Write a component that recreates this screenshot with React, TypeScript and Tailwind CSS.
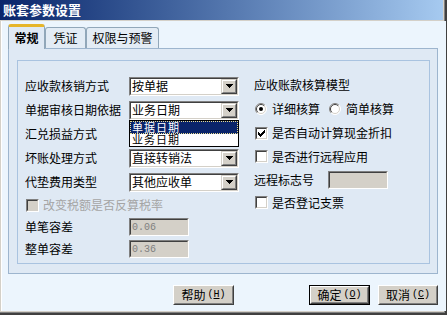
import React from "react";

const outerSunken =
  "border border-t-[#808080] border-l-[#808080] border-r-white border-b-white";
const innerSunken =
  "border border-t-[#404040] border-l-[#404040] border-r-[#d4d0c8] border-b-[#d4d0c8]";

const Arrow = () => (
  <div className="w-[16px] h-full border border-t-[#d4d0c8] border-l-[#d4d0c8] border-r-[#404040] border-b-[#404040]">
    <div className="w-full h-full bg-[#d4d0c8] border border-t-white border-l-white border-r-[#808080] border-b-[#808080] flex items-center justify-center">
      <svg width="7" height="4" viewBox="0 0 7 4" shapeRendering="crispEdges">
        <path d="M0 0h7v1h-1v1h-1v1h-1v1h-1v-1h-1v-1h-1v-1h-1z" fill="#000" />
      </svg>
    </div>
  </div>
);

const Select = ({ value, open }: { value: string; open?: boolean }) => (
  <div className={`relative w-[110px] h-[19px] ${outerSunken}`}>
    <div className={`h-full flex bg-white ${innerSunken}`}>
      <div className="flex-1 flex items-center pl-[1px] leading-none">{value}</div>
      <Arrow />
    </div>
    {open && (
      <div className="absolute z-10 left-[-1px] top-[18px] w-[110px] border border-black bg-white flex flex-col text-[11px]">
        <div className="h-[13px] bg-[#0a246a] text-white outline outline-1 outline-dotted outline-[#e8dc90] -outline-offset-1 flex items-center pl-[2px] leading-[11px] tracking-[1px]">
          单据日期
        </div>
        <div className="h-[12px] flex items-center pl-[2px] leading-[11px] tracking-[1px]">业务日期</div>
      </div>
    )}
  </div>
);

const Check = ({ checked, disabled }: { checked?: boolean; disabled?: boolean }) => (
  <div className={`w-[13px] h-[13px] shrink-0 ${outerSunken}`}>
    <div
      className={`w-full h-full flex items-center justify-center ${innerSunken} ${
        disabled ? "bg-[#d4d0c8]" : "bg-white"
      }`}
    >
      {checked && (
        <svg width="7" height="7" viewBox="0 0 7 7" shapeRendering="crispEdges">
          <path d="M6 0h1v3h-1v1h-1v1h-1v1h-1v1h-1v-1h-1v-1h-1v-3h1v1h1v1h1v-1h1v-1h1z" fill="#000" />
        </svg>
      )}
    </div>
  </div>
);

const Radio = ({ checked }: { checked?: boolean }) => (
  <svg width="12" height="12" viewBox="0 0 12 12" className="shrink-0">
    <circle cx="6" cy="6" r="5.5" fill="#fff" stroke="#ffffff" />
    <path d="M2.1 9.9A5.5 5.5 0 0 1 9.9 2.1" fill="none" stroke="#808080" />
    <path d="M2.8 9.2A4.5 4.5 0 0 1 9.2 2.8" fill="none" stroke="#404040" />
    <path d="M9.2 2.8A4.5 4.5 0 0 1 2.8 9.2" fill="none" stroke="#d4d0c8" />
    {checked && <circle cx="6" cy="6" r="2" fill="#000" />}
  </svg>
);

const Field = ({ value }: { value?: string }) => (
  <div className={`w-[60px] h-[18px] ${outerSunken}`}>
    <div
      className={`h-full bg-[#d4d0c8] flex items-center pl-[1px] font-['Liberation_Mono',monospace] text-[10px] text-[#808080] ${innerSunken}`}
    >
      {value}
    </div>
  </div>
);

const Row = ({ label, children }: { label: string; children: React.ReactNode }) => (
  <div className="h-[24px] flex items-center">
    <span className="w-[104px] shrink-0">{label}</span>
    {children}
  </div>
);

const Button = ({ label, hot, def, w }: { label: string; hot: string; def?: boolean; w: string }) => {
  const inner = (
    <div className="h-full border border-t-white border-l-white border-r-[#404040] border-b-[#404040]">
      <div className="h-full bg-[#d4d0c8] border border-t-[#d4d0c8] border-l-[#d4d0c8] border-r-[#808080] border-b-[#808080] flex items-center justify-center leading-none">
        <span>{label}</span>
        <span className="ml-[2px] font-['Liberation_Mono',monospace] text-[10px]">
          (<u>{hot}</u>)
        </span>
      </div>
    </div>
  );
  return (
    <div className={`${w} h-[20px] ${def ? "border border-black" : ""}`}>{inner}</div>
  );
};

export default function App() {
  return (
    <div className="w-[447px] h-[315px] flex flex-col border-r-2 border-b-2 border-[#404040] font-['Noto_Sans_CJK_SC','Noto_Sans',sans-serif] text-[12px] text-black">
      <div className="flex-1 flex flex-col border-r border-b border-[#808080]">
        <div className="flex-1 flex flex-col border-r border-b border-[#d4d0c8]">
          {/* title bar */}
          <div className="h-[21px] shrink-0 flex items-center pl-[3px] bg-linear-to-r from-[#0a246a] to-[#a6caf0] border-b border-[#d4d0c8] text-white text-[13px] font-bold">
            账套参数设置
          </div>

          <div className="flex-1 flex border-l border-[#d4d0c8]">
            <div className="flex-1 flex flex-col border-l border-white bg-[#ecf5fd] pl-[6px] pr-[8px] pt-[4px]">
              {/* tabs */}
              <div className="h-[24px] flex items-end -mb-px">
                <div className="relative z-10 w-[37px] h-[25px] bg-[#dfe9f4] border-t-[3px] border-t-[#e6b529] border-x border-x-[#91a7b9] rounded-t-[3px] flex items-center justify-center font-bold">
                  常规
                </div>
                <div className="w-[41px] h-[21px] mb-px bg-[#e3ecf5] border border-b-0 border-[#91a7b9] rounded-t-[3px] flex items-center justify-center">
                  凭证
                </div>
                <div className="w-[73px] h-[21px] mb-px bg-[#e3ecf5] border border-b-0 border-[#91a7b9] rounded-t-[3px] flex items-center justify-center">
                  权限与预警
                </div>
              </div>

              {/* panel */}
              <div className="h-[226px] shrink-0 flex border border-[#9db5ce] bg-[#dfe9f4] pl-2 pt-[11px] pr-[7px] pb-[9px]">
                <div className="flex-1 grid grid-cols-[236px_1fr] border border-[#a9c3e0]">
                  <div className="pl-[7px] pt-[13px] flex flex-col">
                    <Row label="应收款核销方式">
                      <Select value="按单据" />
                    </Row>
                    <Row label="单据审核日期依据">
                      <Select value="业务日期" open />
                    </Row>
                    <Row label="汇兑损益方式">
                      <Select value="" />
                    </Row>
                    <Row label="坏账处理方式">
                      <Select value="直接转销法" />
                    </Row>
                    <Row label="代垫费用类型">
                      <Select value="其他应收单" />
                    </Row>
                    <div className="h-[22px] flex items-center pl-px">
                      <Check disabled />
                      <span className="ml-[4px] text-[#a5a5a5]">改变税额是否反算税率</span>
                    </div>
                    <div className="h-[22px] flex items-center">
                      <span className="w-[104px]">单笔容差</span>
                      <Field value="0.06" />
                    </div>
                    <div className="h-[22px] flex items-center">
                      <span className="w-[104px]">整单容差</span>
                      <Field value="0.36" />
                    </div>
                  </div>

                  <div className="pt-[12px] flex flex-col">
                    <div className="h-[24px] flex items-center">应收账款核算模型</div>
                    <div className="h-[24px] flex items-center pl-px">
                      <Radio checked />
                      <span className="ml-[5px]">详细核算</span>
                      <div className="ml-[9px] flex items-center">
                        <Radio />
                        <span className="ml-[5px]">简单核算</span>
                      </div>
                    </div>
                    <div className="h-[24px] flex items-center pl-px">
                      <Check checked />
                      <span className="ml-[4px]">是否自动计算现金折扣</span>
                    </div>
                    <div className="h-[23px] flex items-center pl-px">
                      <Check />
                      <span className="ml-[4px]">是否进行远程应用</span>
                    </div>
                    <div className="h-[23px] flex items-center">
                      <span className="w-[74px]">远程标志号</span>
                      <Field />
                    </div>
                    <div className="h-[23px] flex items-center pl-px">
                      <Check />
                      <span className="ml-[4px]">是否登记支票</span>
                    </div>
                  </div>
                </div>
              </div>

              {/* buttons */}
              <div className="mt-[11px] flex">
                <div className="ml-[165px]">
                  <Button label="帮助" hot="H" w="w-[61px]" />
                </div>
                <div className="ml-[75px]">
                  <Button label="确定" hot="O" def w="w-[61px]" />
                </div>
                <div className="ml-[8px]">
                  <Button label="取消" hot="C" w="w-[60px]" />
                </div>
              </div>
            </div>
          </div>
        </div>
      </div>
    </div>
  );
}
